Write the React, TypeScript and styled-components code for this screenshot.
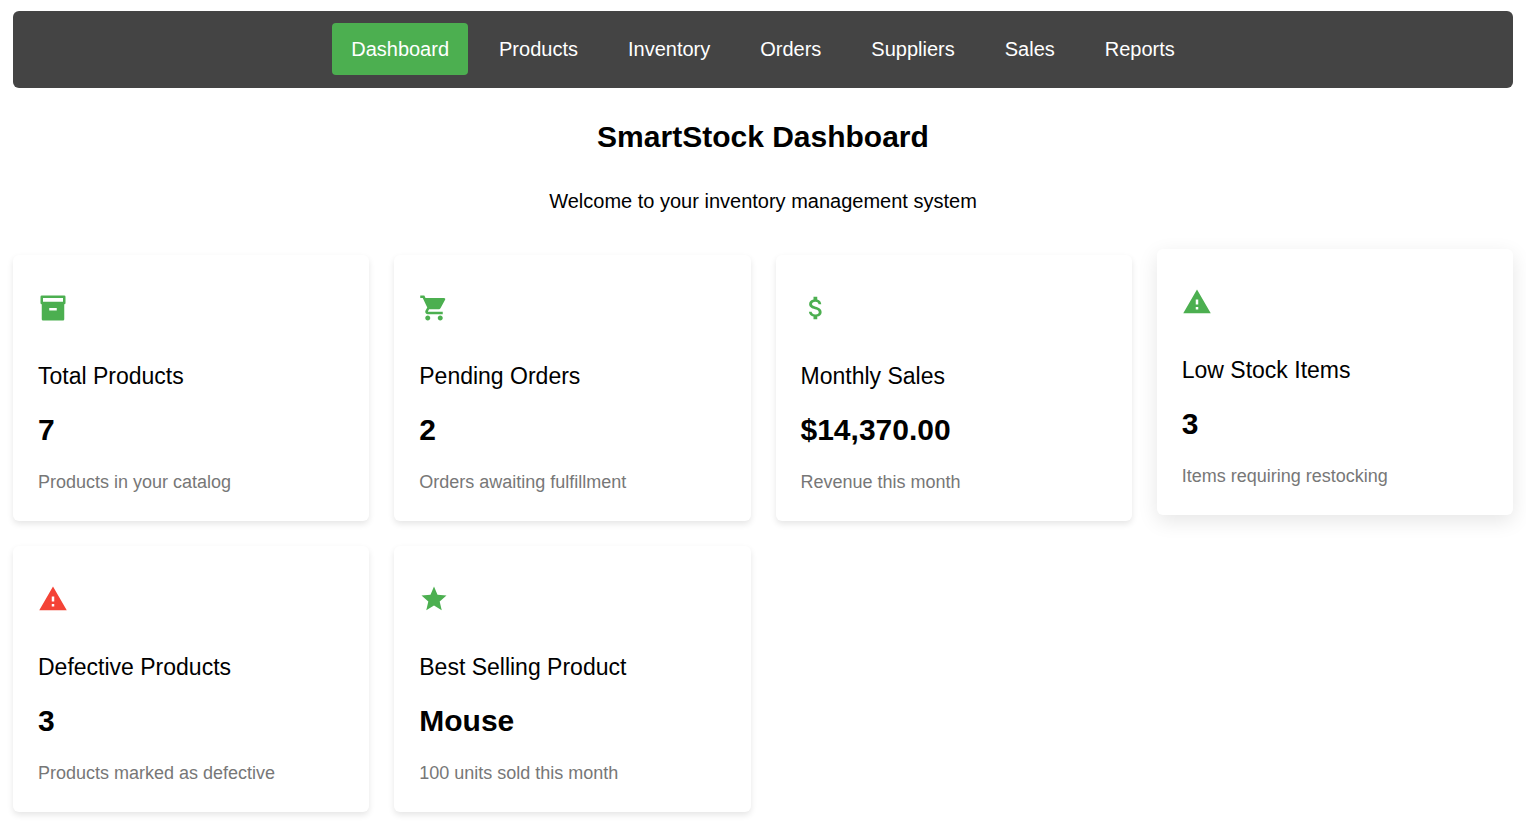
import React from "react";
import styled, { createGlobalStyle } from "styled-components";
import {
  MdAttachMoney,
  MdShoppingCart,
  MdStar,
  MdWarning,
} from "react-icons/md";

const GREEN = "#4caf50";
const RED = "#f44336";

const GlobalStyle = createGlobalStyle`
  *, *::before, *::after {
    box-sizing: border-box;
  }
  body {
    margin: 0;
    background: #fff;
    color: #000;
    font-family: Arial, "Liberation Sans", sans-serif;
    font-size: 20px;
    line-height: 22px;
  }
`;

const Page = styled.div`
  padding: 11px 13px;
`;

const NavBar = styled.nav`
  display: flex;
  justify-content: center;
  flex-wrap: wrap;
  gap: 12px;
  padding: 12px;
  padding-bottom: 13px;
  border-radius: 6px;
  background: #444;
`;

const NavLink = styled.a<{ $active?: boolean }>`
  padding: 15px 19px;
  border-radius: 4px;
  background: ${({ $active }) => ($active ? GREEN : "transparent")};
  color: #fff;
  text-decoration: none;
`;

const Header = styled.header`
  margin: 32px 0 43px;
  text-align: center;
`;

const Heading = styled.h1`
  margin: 0 0 36px;
  font-size: 30px;
  line-height: 34px;
`;

const Welcome = styled.p`
  margin: 0;
`;

const CardGrid = styled.main`
  display: grid;
  grid-template-columns: repeat(auto-fill, minmax(312px, 1fr));
  gap: 25px;
`;

const Card = styled.section<{ $raised?: boolean }>`
  padding: 38px 25px 29px;
  border-radius: 6px;
  background: #fff;
  box-shadow: ${({ $raised }) =>
    $raised ? "0 6px 20px rgba(0, 0, 0, 0.1)" : "0 3px 6px rgba(0, 0, 0, 0.1)"};
  transform: ${({ $raised }) => ($raised ? "translateY(-6px)" : "none")};
`;

const CardIcon = styled.div<{ $color: string }>`
  display: flex;
  margin-bottom: 40px;
  color: ${({ $color }) => $color};
  font-size: 30px;
`;

const CardTitle = styled.h2`
  margin: 0 0 24px;
  font-size: 23px;
  font-weight: 400;
  line-height: 26px;
`;

const CardValue = styled.p`
  margin: 0 0 25px;
  font-size: 30px;
  font-weight: 700;
  line-height: 34px;
`;

const CardNote = styled.p`
  margin: 0;
  color: #777;
  font-size: 18px;
  line-height: 20px;
`;

/* Storage box with an outlined lid and a handle slot. */
function InventoryIcon() {
  return (
    <svg width="1em" height="1em" viewBox="0 0 24 24" fill="currentColor" aria-hidden>
      <path
        fillRule="evenodd"
        d="M3 2h18a1 1 0 0 1 1 1v5a1 1 0 0 1-1 1v12a1 1 0 0 1-1 1H4a1 1 0 0 1-1-1V9a1 1 0 0 1-1-1V3a1 1 0 0 1 1-1zM4 4v3h16V4zM9 12v2h6v-2z"
      />
    </svg>
  );
}

const links = [
  "Dashboard",
  "Products",
  "Inventory",
  "Orders",
  "Suppliers",
  "Sales",
  "Reports",
];

interface Stat {
  icon: React.ComponentType;
  title: string;
  value: string;
  note: string;
  color?: string;
  raised?: boolean;
}

const stats: Stat[] = [
  { icon: InventoryIcon, title: "Total Products", value: "7", note: "Products in your catalog" },
  { icon: MdShoppingCart, title: "Pending Orders", value: "2", note: "Orders awaiting fulfillment" },
  { icon: MdAttachMoney, title: "Monthly Sales", value: "$14,370.00", note: "Revenue this month" },
  { icon: MdWarning, title: "Low Stock Items", value: "3", note: "Items requiring restocking", raised: true },
  { icon: MdWarning, title: "Defective Products", value: "3", note: "Products marked as defective", color: RED },
  { icon: MdStar, title: "Best Selling Product", value: "Mouse", note: "100 units sold this month" },
];

export default function App() {
  return (
    <>
      <GlobalStyle />
      <Page>
        <NavBar>
          {links.map((label, i) => (
            <NavLink
              key={label}
              href={`#${label.toLowerCase()}`}
              $active={i === 0}
              aria-current={i === 0 ? "page" : undefined}
            >
              {label}
            </NavLink>
          ))}
        </NavBar>
        <Header>
          <Heading>SmartStock Dashboard</Heading>
          <Welcome>Welcome to your inventory management system</Welcome>
        </Header>
        <CardGrid>
          {stats.map(({ icon: Icon, title, value, note, color, raised }) => (
            <Card key={title} $raised={raised}>
              <CardIcon $color={color ?? GREEN}>
                <Icon />
              </CardIcon>
              <CardTitle>{title}</CardTitle>
              <CardValue>{value}</CardValue>
              <CardNote>{note}</CardNote>
            </Card>
          ))}
        </CardGrid>
      </Page>
    </>
  );
}
